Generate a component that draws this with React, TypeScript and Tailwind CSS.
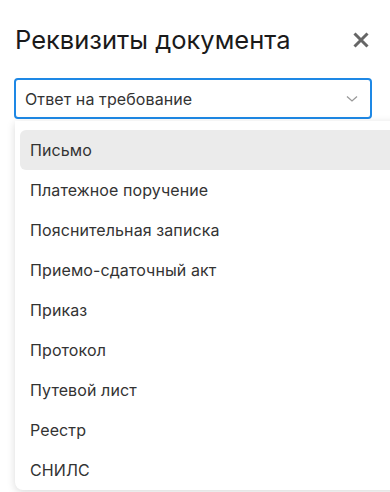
const OPTIONS = [
  "Письмо",
  "Платежное поручение",
  "Пояснительная записка",
  "Приемо-сдаточный акт",
  "Приказ",
  "Протокол",
  "Путевой лист",
  "Реестр",
  "СНИЛС",
];

export default function App() {
  return (
    <div className="w-[390px] h-[492px] overflow-hidden bg-white font-['Inter',sans-serif]">
      {/* Header */}
      <div className="flex items-center justify-between pl-[15px] pr-[20px] pt-[24px]">
        <h1 className="text-[25.5px] leading-[32px] text-[#1a1a1a] font-normal">Реквизиты документа</h1>
        <svg width="18" height="18" viewBox="0 0 18 18" className="text-[#666]">
          <path d="M2.5 2.5 L15.5 15.5 M15.5 2.5 L2.5 15.5" stroke="currentColor" strokeWidth="3" />
        </svg>
      </div>

      {/* Select */}
      <div className="pl-[14px] pr-[18px] pt-[22px]">
        <div className="flex h-[41px] items-center justify-between rounded-[4px] border-2 border-[#1e88e5] pl-[9px] pr-[12px]">
          <span className="text-[16px] tracking-[0.1px] text-[#333]">Ответ на требование</span>
          <svg width="12" height="8" viewBox="0 0 12 8">
            <path d="M1 1.5 L6 6 L11 1.5" fill="none" stroke="#999" strokeWidth="1.3" />
          </svg>
        </div>
      </div>

      {/* Dropdown */}
      <div className="ml-[15px] mt-[2px] w-[400px] rounded-bl-[8px] bg-white pl-[5px] pr-[12px] pt-[9px] shadow-[0_2px_8px_rgba(0,0,0,0.15)]">
        {OPTIONS.map((o, i) => (
          <div
            key={o}
            className={`flex h-[40px] items-center rounded-[6px] px-[10px] text-[16px] tracking-[0.1px] text-[#333] ${
              i === 0 ? "bg-[#ebebeb]" : ""
            }`}
          >
            {o}
          </div>
        ))}
      </div>
    </div>
  );
}
